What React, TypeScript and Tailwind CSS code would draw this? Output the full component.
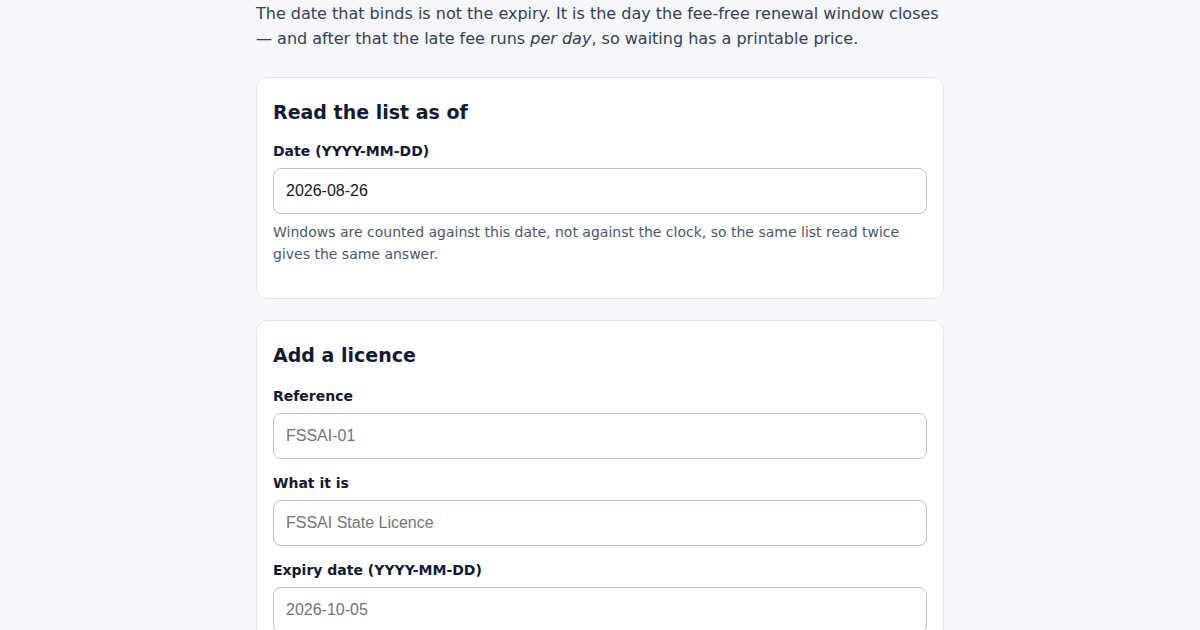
const SANS = "font-['DejaVu_Sans','Noto_Sans',sans-serif]";
const INPUT =
  "w-full h-[46px] rounded-lg border border-[#b9c3d6] bg-white px-3 text-base text-[#111827] placeholder:text-[#757575] font-['Liberation_Sans',Arial,sans-serif] outline-none";

function Field({
  label,
  value,
  placeholder,
}: {
  label: string;
  value?: string;
  placeholder?: string;
}) {
  return (
    <div className="flex flex-col">
      <label className="text-sm font-bold text-[#111a33] leading-5 mb-[7px]">{label}</label>
      <input className={INPUT} defaultValue={value} placeholder={placeholder} />
    </div>
  );
}

export default function App() {
  return (
    <div className={`min-h-screen w-full bg-[#f5f7fb] pt-px ${SANS}`}>
      <div className="mx-auto w-[688px]">
        <p className="text-base leading-[25px] text-[#334155]">
          The date that binds is not the expiry. It is the day the fee-free renewal window closes
          — and after that the late fee runs <em>per day</em>, so waiting has a printable price.
        </p>

        {/* As-of date */}
        <section className="mt-[26px] rounded-xl border border-[#e2e8f0] bg-white px-4 pt-5 pb-[33px]">
          <h2 className="text-[19px] font-bold leading-7 text-[#111a33]">Read the list as of</h2>
          <div className="mt-[15px]">
            <Field label="Date (YYYY-MM-DD)" value="2026-08-26" />
            <p className="mt-[7px] text-sm leading-[22px] text-[#4b5873]">
              Windows are counted against this date, not against the clock, so the same list read
              twice gives the same answer.
            </p>
          </div>
        </section>

        {/* New licence */}
        <section className="mt-[21px] rounded-xl border border-[#e2e8f0] bg-white px-4 pt-5 pb-8">
          <h2 className="text-[19px] font-bold leading-7 text-[#111a33]">Add a licence</h2>
          <div className="mt-[17px] flex flex-col gap-[14px]">
            <Field label="Reference" placeholder="FSSAI-01" />
            <Field label="What it is" placeholder="FSSAI State Licence" />
            <Field label="Expiry date (YYYY-MM-DD)" placeholder="2026-10-05" />
          </div>
        </section>
      </div>
    </div>
  );
}
